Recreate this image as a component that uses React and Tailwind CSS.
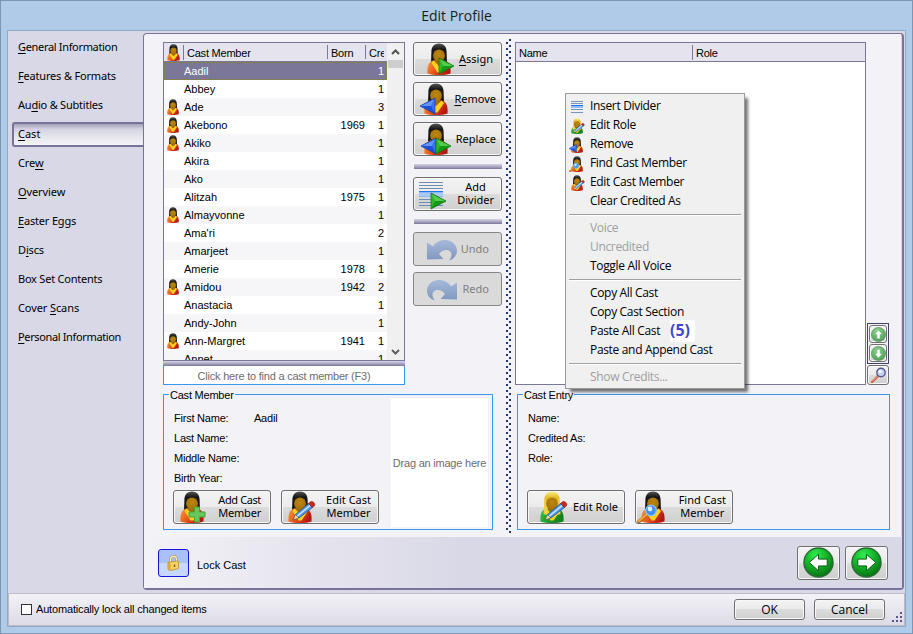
import React from "react";

const UI = "font-['Noto_Sans',sans-serif]";
const LIST = "font-['Liberation_Sans',sans-serif]";
const TIGHT = "tracking-[-0.220px]";

/* ---------- icons ---------- */

function Person({ size = 32, blonde, overlay, className = "" }) {
  const hair = blonde ? "#e3bb2c" : "#161616";
  const hairHi = blonde ? "#fdf08a" : "#555555";
  const robe = blonde ? "#22a330" : "#e8561c";
  const robe2 = blonde ? "#14801f" : "#b5180f";
  const id = "p" + size + (blonde ? "b" : "d") + (overlay || "n");
  return (
    <svg width={size} height={size} viewBox="0 0 32 32" className={"shrink-0 " + className}>
      <defs>
        <linearGradient id={id + "h"} x1="0" y1="0" x2="0" y2="1">
          <stop offset="0" stopColor={hairHi} />
          <stop offset="0.3" stopColor={hair} />
          <stop offset="1" stopColor={hair} />
        </linearGradient>
        <linearGradient id={id + "r"} x1="0" y1="0" x2="1" y2="0.4">
          <stop offset="0" stopColor={blonde ? "#3cc44a" : "#f9a03c"} />
          <stop offset="0.5" stopColor={robe} />
          <stop offset="1" stopColor={robe2} />
        </linearGradient>
        <radialGradient id={id + "f"} cx="0.5" cy="0.4" r="0.7">
          <stop offset="0" stopColor="#bd860e" />
          <stop offset="1" stopColor="#a06d08" />
        </radialGradient>
      </defs>
      <path d="M16 .5C10.500 .5 8.400 4.500 8.400 9L8 20h16l-.4-11C23.600 4.500 21.500 .5 16 .5z" fill={"url(#" + id + "h)"} />
      <path d="M4.500 30.500C4 24.500 5 20 9 18c2-.8 4-1 7-1s5 .2 7 1c4 2 5 6.500 4.500 12.500-6 2-17 2-23 0z" fill={"url(#" + id + "r)"} />
      <path d="M10.500 17.500L16 23l5.500-5.500 2.500 2.500-6.500 9.500h-3L8.500 20z" fill="#f9d41e" />
      <path d="M12 16h8v2.500L16 22.500l-4-4z" fill="#a06d08" />
      {blonde && <path d="M8.800 6L7.500 23l3.500 1 .5-8zM23.200 6l1.300 17-3.500 1-.5-8z" fill="#f0cf48" />}
      <ellipse cx="16" cy="12.600" rx="5.900" ry="6.200" fill={"url(#" + id + "f)"} />
      {overlay === "right" && <ArrowGem x={16} />}
      {overlay === "left" && <ArrowGem x={0} left />}
      {overlay === "both" && (
        <>
          <ArrowGem x={1} left />
          <ArrowGem x={16} />
        </>
      )}
      {overlay === "plus" && (
        <path d="M18.500 16h5v5h5.500v5h-5.500v5h-5v-5H13v-5h5.500z" fill="#66c85a" stroke="#46a03e" strokeWidth="1" />
      )}
      {overlay === "pencil" && (
        <g>
          <path d="M9 29l2.500-5.500 3.500 3.500z" fill="#f2d9a0" stroke="#444" strokeWidth="0.600" />
          <path d="M11.500 23.500L24.500 12.500l4 4L15 27z" fill="#4a93e0" stroke="#1d4c93" strokeWidth="0.700" />
          <path d="M12.700 24.500L25.700 13.700l1.200 1.200L13.800 25.800z" fill="#c4e2fb" />
          <path d="M24.500 12.500l2-1.700c2-1.300 5.400 1.700 4 4l-2 1.700z" fill="#c22c22" stroke="#8d1a14" strokeWidth="0.600" />
        </g>
      )}
      {overlay === "glass" && (
        <g>
          <path d="M2 30.500L9.500 24" stroke="#b56a12" strokeWidth="3.600" strokeLinecap="round" />
          <path d="M2 30L9.500 23.500" stroke="#f4a63a" strokeWidth="2" strokeLinecap="round" />
          <circle cx="14" cy="19.500" r="5.300" fill="#3d8ff0" stroke="#8cc4f8" strokeWidth="1.200" />
          <circle cx="13" cy="18" r="2.400" fill="#d8efff" />
        </g>
      )}
    </svg>
  );
}

function ArrowGem({ x, left }) {
  return left ? (
    <g transform={"translate(" + x + " 15)"}>
      <path d="M0 8L15 0v16z" fill="#1e4fd8" stroke="#173aa4" strokeWidth="0.700" />
      <path d="M1 8L14.500 1 11 8z" fill="#5f95ff" />
      <path d="M11 8l3.500-7v14z" fill="#3b74f2" />
    </g>
  ) : (
    <g transform={"translate(" + x + " 15)"}>
      <path d="M0 0l15 8-15 8z" fill="#159a18" stroke="#0d6d10" strokeWidth="0.700" />
      <path d="M.5 1L14 8H4z" fill="#55cc4b" />
      <path d="M.5 1L4 8 .5 15z" fill="#2cb92a" />
    </g>
  );
}

function LinesArrow() {
  return (
    <svg width="32" height="32" viewBox="0 0 32 32" className="shrink-0">
      <rect x="2" y="13" width="24" height="6" fill="#8fb6f4" />
      <rect x="2" y="15" width="24" height="3" fill="#a9c9fb" />
      <rect x="2" y="13" width="24" height="1" fill="#2676e0" />
      {[4, 7, 10, 21, 24, 27].map((y) => (
        <rect key={y} x="2" y={y} width="24" height="1" fill="#6d8cb6" />
      ))}
      <g transform="translate(14 15)">
        <path d="M0 0l15 8-15 8z" fill="#159a18" stroke="#0d6d10" strokeWidth="0.700" />
        <path d="M.5 1L14 8H4z" fill="#55cc4b" />
        <path d="M.5 1L4 8 .5 15z" fill="#2cb92a" />
      </g>
    </svg>
  );
}

function MenuLines() {
  return (
    <svg width="14" height="12" viewBox="0 0 14 12" className="ml-[1px]">
      <path d="M1 .5h12M1 2.500h12M1 8.500h12M1 11.500h12" stroke="#7b93b5" />
      <rect x="1" y="4" width="12" height="3" fill="#8fbdf8" />
      <rect x="1" y="4" width="12" height="1" fill="#1f74e0" />
    </svg>
  );
}

function CurveArrow({ flip }) {
  const id = flip ? "redoFill" : "undoFill";
  return (
    <svg width="30" height="23" viewBox="0 0 30 23" className="mt-[3px] shrink-0">
      <defs>
        <linearGradient id={id} x1="0" y1="0" x2="0" y2="1">
          <stop offset="0" stopColor="#a5b9d9" />
          <stop offset="1" stopColor="#7f97bf" />
        </linearGradient>
      </defs>
      <g transform={flip ? "matrix(-1 0 0 1 30 0)" : undefined}>
        <path
          d="M0 3.500V20.500L16.500 20l-4.500-5C14 12 17.500 10.500 20.500 11c4.500 1 5.500 6 1.500 10.500C27.500 20 30 16 30 11.500 29.500 5 24 1 18 1 12.500 1 8.500 3.500 6 7.500z"
          fill={"url(#" + id + ")"}
        />
      </g>
    </svg>
  );
}

function RoundArrow({ dir, size = 31, pale }) {
  const rot = { left: 0, up: 90, right: 180, down: 270 }[dir];
  const id = "ra" + dir;
  return (
    <svg width={size} height={size} viewBox="0 0 32 32" className="shrink-0">
      <defs>
        <radialGradient id={id} cx="0.400" cy="0.250" r="0.850">
          <stop offset="0" stopColor={pale ? "#8fd08f" : "#2ef04e"} />
          <stop offset="0.500" stopColor={pale ? "#6ab871" : "#12ac26"} />
          <stop offset="1" stopColor={pale ? "#4f9a57" : "#06610f"} />
        </radialGradient>
      </defs>
      <circle cx="16" cy="16" r="15" fill={"url(#" + id + ")"} stroke={pale ? "#4f8a59" : "#2f6b39"} strokeWidth="1.500" />
      <g transform={"rotate(" + rot + " 16 16)"}>
        <path d="M6.500 16l9.500-8.500v5h9v7h-9v5z" fill="#fff" stroke={pale ? "#5ca566" : "#0a5a12"} strokeWidth="1" />
      </g>
    </svg>
  );
}

function Magnifier() {
  return (
    <svg width="17" height="17" viewBox="0 0 17 17">
      <path d="M2 15L8 9" stroke="#c85a38" strokeWidth="2.400" strokeLinecap="round" />
      <path d="M2 14.500L7.500 9" stroke="#f8b49c" strokeWidth="1" />
      <circle cx="11" cy="5.500" r="4.200" fill="#c9d2f4" stroke="#55588f" strokeWidth="1.400" />
      <circle cx="10" cy="4.400" r="1.500" fill="#fff" />
    </svg>
  );
}

function Padlock() {
  return (
    <svg width="15" height="18" viewBox="0 0 15 18">
      <path d="M4.500 9V5.500C4.500 1.500 10 1 10.500 5v3" fill="none" stroke="#b39a55" strokeWidth="2.400" />
      <path d="M4.500 9V5.500C4.500 1.700 10 1.200 10.500 5v3" fill="none" stroke="#fbf0bd" strokeWidth="1.200" />
      <path d="M2 8.500l8.500-1.500 2 1v6.500L4.500 16.500 2 15.500z" fill="#f7d364" stroke="#b98a22" strokeWidth="0.800" />
      <path d="M2.500 9l2 .6v6.300l-2-.8z" fill="#d9a534" />
      <path d="M8.500 10.500V13" stroke="#7d5510" strokeWidth="1.400" />
    </svg>
  );
}

/* ---------- controls ---------- */

function Btn({ className = "", disabled, children }) {
  return (
    <button
      className={
        "flex items-center rounded-[3px] border text-[11px] leading-[13px] " +
        (disabled
          ? "border-[#858585] bg-[#dadada] text-[#808080] "
          : "border-[#707070] bg-[linear-gradient(#f3f3f3_0%,#ebebeb_49%,#dcdcdc_50%,#cfcfcf_100%)] text-black shadow-[inset_0_0_0_1px_#f7f7f7] ") +
        className
      }
    >
      {children}
    </button>
  );
}

function U({ children }) {
  return <span className="underline underline-offset-[2px]">{children}</span>;
}

const NAV = [
  ["", "G", "eneral Information", "tracking-[-0.330px]"],
  ["", "F", "eatures & Formats", "tracking-[-0.180px]"],
  ["Au", "d", "io & Subtitles", "tracking-[-0.220px]"],
  ["", "C", "ast", ""],
  ["Cre", "w", "", "tracking-[-0.150px]"],
  ["", "O", "verview", "tracking-[-0.100px]"],
  ["", "E", "aster Eggs", "tracking-[-0.180px]"],
  ["D", "i", "scs", "tracking-[-0.150px]"],
  ["Box Set Contents", "", "", "tracking-[-0.230px]"],
  ["Cover ", "S", "cans", "tracking-[-0.100px]"],
  ["", "P", "ersonal Information", "tracking-[-0.360px]"],
];

function Sidebar() {
  return (
    <nav className={"flex w-[135px] shrink-0 flex-col pl-[4px] pt-[2px] text-[11px] " + UI}>
      {NAV.map(([a, u, b, t], i) =>
        i === 3 ? (
          <div
            key={i}
            className="-mr-px my-[2px] flex h-[25px] items-center rounded-l-[3px] border-y-2 border-l-2 border-[#77739a] bg-[linear-gradient(#a4a2bb_0%,#d4d3e0_25%,#e6e6ee_60%,#f3f2f7_100%)] pl-[4px]"
          >
            <U>{u}</U>
            {b}
          </div>
        ) : (
          <div key={i} className={"flex h-[29px] items-center whitespace-pre pl-[6px] " + t}>
            {a}
            <U>{u}</U>
            {b}
          </div>
        )
      )}
    </nav>
  );
}

const CAST = [
  [0, "Aadil", "", 1],
  [0, "Abbey", "", 1],
  [1, "Ade", "", 3],
  [1, "Akebono", "1969", 1],
  [1, "Akiko", "", 1],
  [0, "Akira", "", 1],
  [0, "Ako", "", 1],
  [0, "Alitzah", "1975", 1],
  [1, "Almayvonne", "", 1],
  [0, "Ama'ri", "", 2],
  [0, "Amarjeet", "", 1],
  [0, "Amerie", "1978", 1],
  [1, "Amidou", "1942", 2],
  [0, "Anastacia", "", 1],
  [0, "Andy-John", "", 1],
  [1, "Ann-Margret", "1941", 1],
  [0, "Annet", "", 1],
];

function CastList() {
  return (
    <div className={"flex h-[319px] w-[242px] border border-[#7b7799] bg-white text-[11px] " + LIST}>
      <div className="flex w-[223px] flex-col overflow-hidden">
        <div className={"flex h-[19px] shrink-0 items-center border-b border-[#7b7799] bg-[#e5e4ee] " + TIGHT}>
          <div className="flex h-[15px] w-[20px] items-center justify-center border-r border-[#7b7799]">
            <Person size={17} />
          </div>
          <div className="h-[14px] w-[144px] border-r border-[#7b7799] pl-[3px] leading-[16px]">Cast Member</div>
          <div className="h-[14px] w-[38px] border-r border-[#7b7799] pl-[3px] leading-[16px]">Born</div>
          <div className="h-[14px] w-[18px] overflow-hidden pl-[3px] leading-[16px]">Credits</div>
        </div>
        {CAST.map(([icon, name, born, n], i) => (
          <div
            key={name}
            className={
              "flex h-[18px] shrink-0 items-center " +
              (i === 0
                ? "border border-[#82804e] bg-[#7b7799] text-white"
                : i % 2
                ? "border border-white bg-white"
                : "border border-[#f6f6f9] bg-[#f6f6f9]")
            }
          >
            <div className="w-[19px]">{icon ? <Person size={16} /> : null}</div>
            <div className="w-[120px]">{name}</div>
            <div className="w-[61px] text-right">{born}</div>
            <div className="w-[19px] text-right">{n}</div>
          </div>
        ))}
      </div>
      <div className="flex w-[17px] flex-col items-center justify-between bg-[#f0f0f0]">
        <div className="flex w-[15px] flex-col items-center">
          <svg width="9" height="17" viewBox="0 0 9 17">
            <path d="M1 11l3.500-3.500L8 11" fill="none" stroke="#505050" strokeWidth="2" />
          </svg>
          <div className="h-[8px] w-full bg-[#cdcdcd]" />
        </div>
        <svg width="9" height="17" viewBox="0 0 9 17">
          <path d="M1 7l3.500 3.500L8 7" fill="none" stroke="#606060" strokeWidth="2" />
        </svg>
      </div>
    </div>
  );
}

function Bar({ className = "" }) {
  return (
    <div className={"h-[5px] shrink-0 bg-[linear-gradient(#d5d4e2,#b5b3c9_40%,#8f8cac_80%,#77739a)] " + className} />
  );
}

function Actions() {
  return (
    <div className={"ml-[8px] flex w-[89px] flex-col " + UI}>
      <Btn className="h-[34px] justify-between pl-[9px] pr-[8px]">
        <Person overlay="right" />
        <span className="pb-[2px]"><U>A</U>ssign</span>
      </Btn>
      <Btn className="mt-[6px] h-[34px] justify-between pl-[6px] pr-[5px]">
        <Person overlay="left" />
        <span className="pb-[2px]"><U>R</U>emove</span>
      </Btn>
      <Btn className="mt-[6px] h-[34px] justify-between pl-[6px] pr-[5px]">
        <Person overlay="both" />
        <span className="pb-[2px]">Replace</span>
      </Btn>
      <Bar className="mt-[8px] ml-[1px]" />
      <Btn className="mt-[8px] h-[34px] justify-between pl-[3px] pr-[7px] text-center">
        <LinesArrow />
        <span className="pb-[2px]">Add<br />Divider</span>
      </Btn>
      <Bar className="mt-[8px] ml-[1px]" />
      <Btn disabled className="mt-[8px] h-[34px] justify-between pl-[13px] pr-[12px]">
        <CurveArrow />
        <span className="pb-[2px]">Undo</span>
      </Btn>
      <Btn disabled className="mt-[6px] h-[34px] justify-between pl-[13px] pr-[12px]">
        <CurveArrow flip />
        <span className="pb-[2px]">Redo</span>
      </Btn>
    </div>
  );
}

function Group({ title, className, children }) {
  return (
    <section className={"flex h-[136px] flex-col border border-[#3a98ee] " + className}>
      <h2 className={"-mt-[8px] ml-[5px] h-[15px] w-max bg-[#f3f2f7] px-px text-[11px] leading-[16px] " + TIGHT + " " + LIST}>
        {title}
      </h2>
      {children}
    </section>
  );
}

function EntryPane() {
  return (
    <div className="flex h-[343px]">
      <div className={"flex w-[351px] flex-col border border-[#7b7799] bg-white text-[11px] " + LIST}>
        <div className={"flex h-[19px] items-center border-b border-[#7b7799] bg-[#e5e4ee] " + TIGHT}>
          <div className="h-[15px] w-[177px] border-r border-[#7b7799] pl-[3px] leading-[16px]">Name</div>
          <div className="h-[15px] pl-[3px] leading-[16px]">Role</div>
        </div>
      </div>
      <div className="ml-[1px] flex w-[22px] flex-col justify-end">
        <div className="flex h-[41px] flex-col items-center justify-between border border-[#44406a] bg-[#f3f2f7] py-px">
          <Btn className="h-[18px] w-[18px] justify-center"><RoundArrow dir="up" size={15} pale /></Btn>
          <Btn className="h-[18px] w-[18px] justify-center"><RoundArrow dir="down" size={15} pale /></Btn>
        </div>
        <Btn className="mt-[1px] h-[20px] w-[22px] justify-center"><Magnifier /></Btn>
      </div>
    </div>
  );
}

function MenuItem({ icon, off, children }) {
  return (
    <div className={"flex h-[19px] items-center " + (off ? "text-[#9f9f9f]" : "text-black")}>
      <div className="flex w-[24px] shrink-0 justify-start pl-[3px]">{icon}</div>
      <span className="whitespace-nowrap pb-[2px]">{children}</span>
    </div>
  );
}

function Rule() {
  return <div className="mx-[3px] my-[3px] h-[2px] border-b border-white bg-[#a0a0a0]" />;
}

function ContextMenu() {
  return (
    <div className="absolute left-[564px] top-[92px] h-[296px] w-[180px] border border-[#9a9a9a] bg-[#f0f0f0] pt-[3px] font-['Open_Sans',sans-serif] text-[12px] leading-[16px] tracking-[-0.330px] shadow-[4px_4px_3px_-1px_rgba(0,0,0,0.550)]">
      <MenuItem icon={<MenuLines />}>Insert Divider</MenuItem>
      <MenuItem icon={<Person size={16} blonde overlay="pencil" />}>Edit Role</MenuItem>
      <MenuItem icon={<Person size={16} overlay="left" />}>Remove</MenuItem>
      <MenuItem icon={<Person size={16} overlay="glass" />}>Find Cast Member</MenuItem>
      <MenuItem icon={<Person size={16} overlay="pencil" />}>Edit Cast Member</MenuItem>
      <MenuItem>Clear Credited As</MenuItem>
      <Rule />
      <MenuItem off>Voice</MenuItem>
      <MenuItem off>Uncredited</MenuItem>
      <MenuItem>Toggle All Voice</MenuItem>
      <Rule />
      <MenuItem>Copy All Cast</MenuItem>
      <MenuItem>Copy Cast Section</MenuItem>
      <div className="flex h-[19px] items-center pl-[24px]">
        <span className="w-[80px] whitespace-nowrap pb-[2px]">Paste All Cast</span>
        <b className="-mb-[2px] -mt-[4px] h-[22px] w-[25px] bg-white text-[16px] leading-[21px] tracking-normal text-[#3f48cc]">(5)</b>
      </div>
      <MenuItem>Paste and Append Cast</MenuItem>
      <Rule />
      <MenuItem off>Show Credits...</MenuItem>
    </div>
  );
}

export default function App() {
  return (
    <div className="relative flex h-[634px] w-[913px] flex-col border border-[#7d96b3] bg-[#b0cbe8] px-[6px] pb-[6px] text-black">
      <header className="flex h-[29px] items-center justify-center font-['Open_Sans',sans-serif] text-[14px] text-[#1b1b1b]">
        Edit Profile
      </header>
      <div className="flex h-[597px] w-[899px] flex-col border border-[#8fa9c6] bg-[#d9d8e6]">
        <div className="flex h-[562px]">
          <Sidebar />
          <main className="mt-[2px] flex h-[557px] w-[761px] flex-col rounded-[4px] border border-[#77739a] border-b-2 border-r-2 bg-[#d9d8e6]">
            <div className="flex h-[503px] w-[757px] rounded-tl-[4px] bg-[#f3f2f7] pl-[19px] pt-[8px]">
              <div className="flex flex-col">
                <div className="flex">
                  <div className="flex flex-col">
                    <CastList />
                    <Bar />
                    <div className={"flex h-[19px] w-[242px] items-center justify-center border border-t-0 border-[#3a98ee] bg-white pt-[2px] text-[11px] text-[#6d6d6d] " + TIGHT + " " + LIST}>
                      Click here to find a cast member (F3)
                    </div>
                  </div>
                  <Actions />
                </div>
                <Group title="Cast Member" className="mt-[9px] w-[330px]">
                  <div className="flex">
                    <div className="w-[227px]">
                      <div className={"grid grid-cols-[79px_auto] gap-x-px pl-[10px] pt-[6px] text-[11px] leading-[20px] " + TIGHT + " " + LIST}>
                        <span>First Name:</span><span>Aadil</span>
                        <span className="col-span-2">Last Name:</span>
                        <span className="col-span-2">Middle Name:</span>
                        <span className="col-span-2">Birth Year:</span>
                      </div>
                      <div className={"flex gap-[10px] pl-[9px] pt-[2px] text-center " + UI}>
                        <Btn className="h-[34px] w-[98px] justify-between pl-[2px] pr-[9px]">
                          <Person overlay="plus" />
                          <span className="pb-[2px] tracking-[-0.400px]">Add Cast<br /><span className="tracking-[-0.200px]">Member</span></span>
                        </Btn>
                        <Btn className="h-[34px] w-[98px] shrink-0 justify-between pl-[2px] pr-[7px]">
                          <Person overlay="pencil" />
                          <span className="pb-[2px]">Edit Cast<br />Member</span>
                        </Btn>
                      </div>
                    </div>
                    <div className={"-mt-[4px] flex h-[129px] w-[97px] items-center justify-center whitespace-nowrap bg-white pt-[2px] text-[11px] text-[#6d6d6d] " + TIGHT + " " + LIST}>
                      Drag an image here
                    </div>
                  </div>
                </Group>
              </div>
              <svg className="-mt-[3px] ml-[4px] shrink-0" width="6" height="494">
                <defs>
                  <pattern id="grip" width="6" height="6" patternUnits="userSpaceOnUse">
                    <rect x="0" y="3" width="2" height="2" fill="#1f3874" />
                    <rect x="3" y="0" width="2" height="2" fill="#1f3874" />
                  </pattern>
                </defs>
                <rect width="6" height="494" fill="url(#grip)" />
              </svg>
              <div className="ml-[3px] flex flex-col">
                <EntryPane />
                <Group title="Cast Entry" className="ml-[2px] mt-[9px] w-[373px]">
                  <div className={"h-[80px] pl-[10px] pt-[6px] text-[11px] leading-[20px] " + TIGHT + " " + LIST}>
                    <div>Name:</div>
                    <div>Credited As:</div>
                    <div>Role:</div>
                  </div>
                  <div className={"flex gap-[10px] pl-[9px] pt-[8px] text-center " + UI}>
                    <Btn className="h-[34px] w-[98px] justify-between pl-[8px] pr-[6px]">
                      <Person blonde overlay="pencil" />
                      <span className="pb-[1px]">Edit Role</span>
                    </Btn>
                    <Btn className="h-[34px] w-[98px] justify-between pl-px pr-[6px]">
                      <Person overlay="glass" />
                      <span className="pb-[2px]">Find Cast<br />Member</span>
                    </Btn>
                  </div>
                </Group>
              </div>
            </div>
            <footer className="flex flex-1 items-center bg-[linear-gradient(90deg,#f3f2f7_0%,#d9d8e6_42%)] pl-[14px] pr-[14px]">
              <button className="flex h-[28px] w-[31px] items-center justify-center rounded-[3px] border border-[#1414d8] bg-[linear-gradient(#a9c0f8_50%,#c6d8fd_50%)]">
                <Padlock />
              </button>
              <span className={"ml-[8px] pt-[6px] text-[11px] " + LIST}>Lock Cast</span>
              <div className="ml-auto flex gap-[5px]">
                <Btn className="h-[34px] w-[43px] justify-center"><RoundArrow dir="left" /></Btn>
                <Btn className="h-[34px] w-[43px] justify-center"><RoundArrow dir="right" /></Btn>
              </div>
            </footer>
          </main>
        </div>
        <div className="flex h-[33px] items-center border border-[#bdbcc6] bg-[linear-gradient(#f3f2f7,#dcdbe6)] pl-[12px] text-[11px]">
          <span className="h-[11px] w-[11px] border border-[#333] bg-white" />
          <span className={"ml-[4px] tracking-[-0.170px] " + LIST}>Automatically lock all changed items</span>
          <div className="ml-auto flex gap-[9px] font-['Open_Sans',sans-serif]">
            <Btn className="h-[21px] w-[71px] justify-center text-[12px]">OK</Btn>
            <Btn className="h-[21px] w-[71px] justify-center text-[12px]">Cancel</Btn>
          </div>
          <svg width="12" height="12" className="mb-[1px] ml-[7px] self-end" fill="#5a5688">
            <path d="M8 0h2v2h-2zM4 4h2v2h-2zM8 4h2v2h-2zM0 8h2v2h-2zM4 8h2v2h-2zM8 8h2v2h-2z" />
          </svg>
        </div>
      </div>
      <ContextMenu />
    </div>
  );
}
